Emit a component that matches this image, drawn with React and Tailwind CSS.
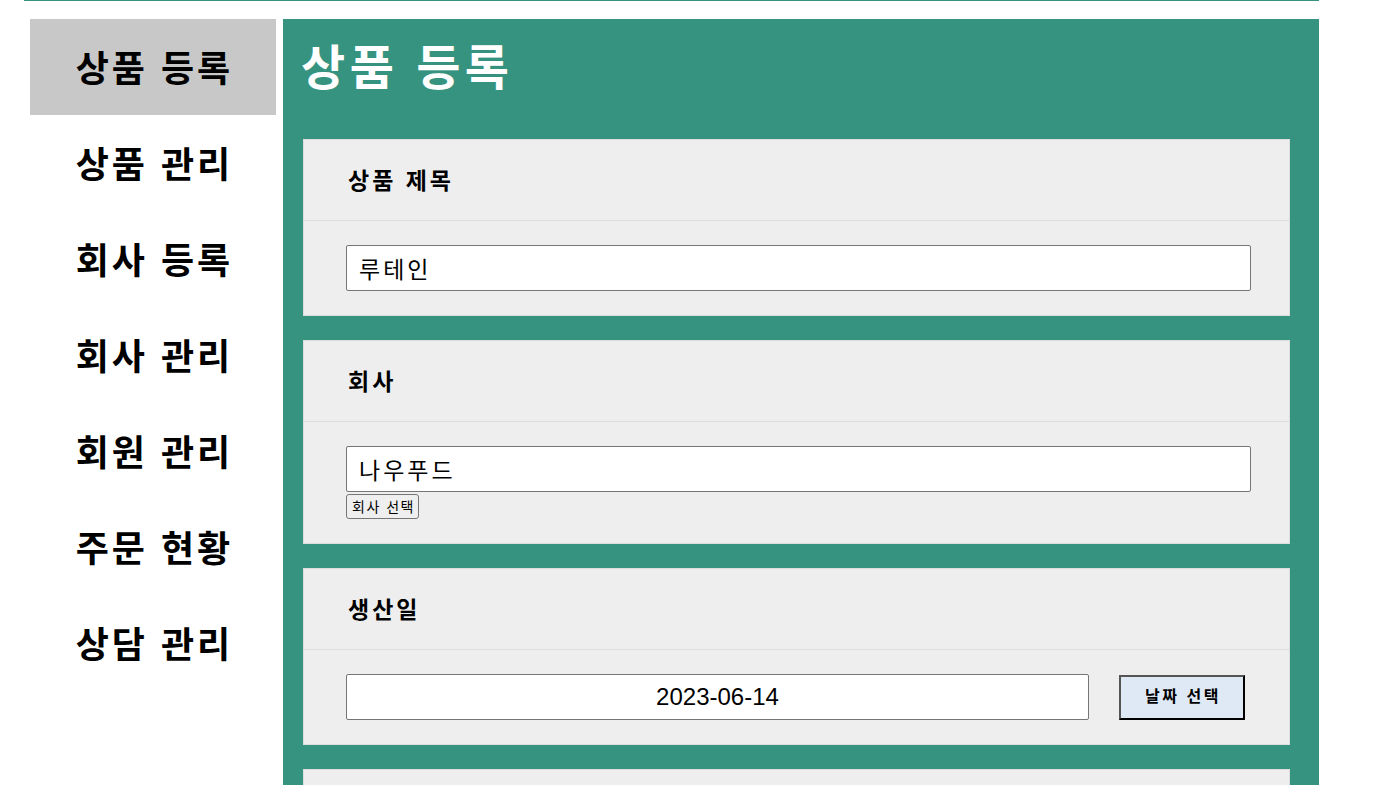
import React, { useState } from 'react';

const menus = ['상품 등록', '상품 관리', '회사 등록', '회사 관리', '회원 관리', '주문 현황', '상담 관리'];

const Card = ({ label, children }) => (
    <div className="bg-[#eeeeee] border border-[#dddddd] mb-[24px]">
        <div className="h-[81px] border-b border-[#dddddd] flex items-center pl-[44px] pt-[2px]">
            <span className="text-[23px] font-bold leading-none tracking-[3px]">{label}</span>
        </div>
        <div className="pl-[42px] pr-[38px] pt-[24px] pb-[24px]">{children}</div>
    </div>
);

const App = () => {
    const [active] = useState(0);
    const [title, setTitle] = useState('루테인');
    const [company, setCompany] = useState('나우푸드');

    return (
        <div className="ml-[24px] w-[1295px] border-t border-[#36937f] text-black" style={{ fontFamily: '"Liberation Sans", "Noto Sans CJK KR", sans-serif' }}>
            <div className="flex pt-[18px] pl-[6px] gap-[7px]">
                {/* Sidebar */}
                <aside className="w-[246px] shrink-0">
                    {menus.map((m, i) => (
                        <div key={m} className={`h-[96px] flex items-center justify-center pt-[5px] pl-[3px] text-[36px] font-bold leading-none tracking-[3px] ${i === active ? 'bg-[#c8c8c8]' : ''}`}>
                            {m}
                        </div>
                    ))}
                </aside>

                {/* Main */}
                <main className="flex-1 bg-[#36937f] pl-[20px] pr-[29px] pt-[26px] min-h-[900px]">
                    <h1 className="text-[48px] font-bold text-white leading-[48px] mb-[46px] -ml-[2px] tracking-[4.5px]">상품 등록</h1>

                    <Card label="상품 제목">
                        <input
                            value={title}
                            onChange={(e) => setTitle(e.target.value)}
                            className="w-full h-[46px] bg-white border border-[#767676] rounded-[2px] px-[12px] text-[23px] tracking-[3px] outline-none"
                        />
                    </Card>

                    <Card label="회사">
                        <input
                            value={company}
                            onChange={(e) => setCompany(e.target.value)}
                            className="w-full h-[46px] bg-white border border-[#767676] rounded-[2px] px-[12px] text-[23px] tracking-[3px] outline-none"
                        />
                        <div className="mt-[2px]">
                            <button className="h-[25px] w-[73px] px-0 pl-[2px] text-[14px] leading-none tracking-[1.5px] bg-[#efefef] border border-[#767676] rounded-[3px]">
                                회사 선택
                            </button>
                        </div>
                    </Card>

                    <Card label="생산일">
                        <div className="flex items-center">
                            <input
                                value="2023-06-14"
                                readOnly
                                className="w-[743px] h-[46px] bg-white border border-[#767676] rounded-[2px] text-center text-[24px] outline-none"
                            />
                            <button className="ml-[30px] w-[126px] h-[45px] pl-[2px] bg-[#dfe8f5] border-2 border-t-[#555555] border-l-[#555555] border-b-black border-r-black text-[16px] font-bold tracking-[2.5px]">
                                날짜 선택
                            </button>
                        </div>
                    </Card>

                    <Card label="유통기한">
                        <input className="w-full h-[46px] bg-white border border-[#767676] rounded-[2px] px-[12px] text-[23px] outline-none" />
                    </Card>
                </main>
            </div>
        </div>
    );
};

export default App;
